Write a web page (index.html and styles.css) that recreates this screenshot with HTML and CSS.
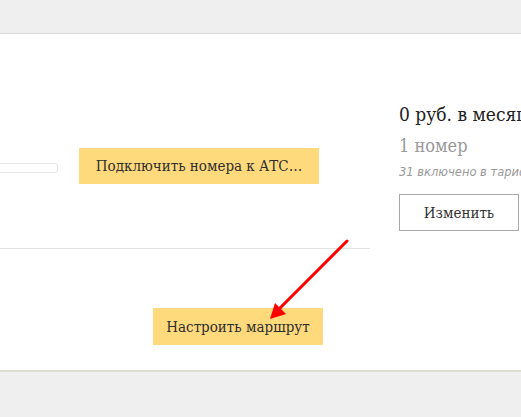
FILE: index.html
```html
<!DOCTYPE html>
<html lang="ru">
<head>
    <meta charset="UTF-8">
    <title>АТС</title>
    <link rel="stylesheet" href="styles.css">
</head>
<body>
    <div class="top-band"></div>
    <div class="page">
        <div class="left">
            <div class="connect-row">
                <input class="search" type="text">
                <button class="btn-yellow btn-connect">Подключить номера к АТС…</button>
            </div>
            <div class="route-row">
                <button class="btn-yellow btn-route">Настроить маршрут</button>
            </div>
        </div>
        <div class="tariff">
            <div class="price">0 руб. в месяц</div>
            <div class="count">1 номер</div>
            <div class="note">31 включено в тариф</div>
            <button class="btn-change">Изменить</button>
        </div>
        <svg class="arrow" width="521" height="417" viewBox="0 0 521 417">
            <line x1="347" y1="241" x2="276" y2="312" stroke="#f00" stroke-width="3" stroke-linecap="round"/>
            <polygon points="270,319 275,303 286,314" fill="#f00"/>
        </svg>
    </div>
    <div class="bottom-band"></div>
</body>
</html>
```

FILE: styles.css
```css
/* Стили страницы */
body {
    margin: 0;
    background-color: #efefef;
    font-family: "DejaVu Serif Condensed", "DejaVu Serif", serif;
    font-stretch: condensed;
    color: #333;
    overflow: hidden;
}

.top-band {
    height: 33px;
    border-bottom: 1px solid #d9d9d9;
    background-color: #efefef;
}

.page {
    position: relative;
    display: flex;
    height: 336px;
    background-color: #fff;
    border-bottom: 2px solid #dcdcd4;
    overflow: hidden;
}

.left {
    width: 370px;
    flex-shrink: 0;
}

.connect-row {
    display: flex;
    align-items: flex-start;
    height: 215px;
    border-bottom: 1px solid #e2e2e2;
    padding-top: 114px;
    box-sizing: border-box;
}

.search {
    width: 66px;
    height: 8px;
    margin-left: -10px;
    margin-top: 15px;
    border: 1px solid #e6e6e6;
    border-radius: 3px;
    padding: 0;
}

.btn-yellow {
    background-color: #ffda7d;
    color: #2e2e2e;
    border: none;
    font-family: inherit;
    font-stretch: condensed;
    font-size: 15px;
    cursor: pointer;
    padding: 0;
}

.btn-connect {
    width: 240px;
    height: 36px;
    margin-left: 21px;
}

.route-row {
    padding-top: 59px;
    padding-left: 153px;
}

.btn-route {
    width: 170px;
    height: 37px;
}

/* правая колонка обрезается краем окна, как на скриншоте */
.tariff {
    padding-left: 29px;
    padding-top: 66px;
    white-space: nowrap;
}

.price {
    font-size: 19px;
    color: #222;
    line-height: 28px;
}

.count {
    font-size: 18px;
    color: #999;
    line-height: 24px;
    margin-top: 6px;
}

.note {
    font-family: "DejaVu Sans", "Liberation Sans", sans-serif;
    font-stretch: normal;
    font-style: italic;
    font-size: 11.5px;
    line-height: 13px;
    color: #999;
    margin-top: 8px;
}

.btn-change {
    display: block;
    width: 120px;
    height: 37px;
    margin-top: 15px;
    background: #fff;
    border: 1px solid #aaa;
    font-family: inherit;
    font-stretch: condensed;
    font-size: 15px;
    color: #333;
    padding: 0;
}

.arrow {
    position: absolute;
    left: 0;
    top: -34px;
    pointer-events: none;
}

.bottom-band {
    height: 46px;
}
```
